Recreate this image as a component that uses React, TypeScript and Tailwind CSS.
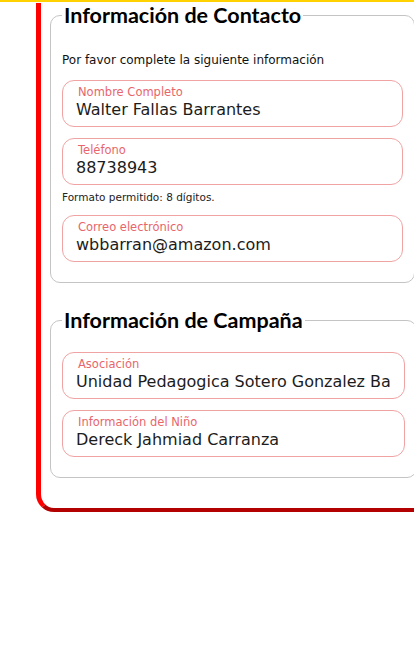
import React from 'react'

type Field = { label: string; value: string; hint?: string }

const contacto: Field[] = [
  { label: 'Nombre Completo', value: 'Walter Fallas Barrantes' },
  { label: 'Teléfono', value: '88738943', hint: 'Formato permitido: 8 dígitos.' },
  { label: 'Correo electrónico', value: 'wbbarran@amazon.com' },
]

const campana: Field[] = [
  { label: 'Asociación', value: 'Unidad Pedagogica Sotero Gonzalez Ba' },
  { label: 'Información del Niño', value: 'Dereck Jahmiad Carranza' },
]

function Input({ field }: { field: Field }) {
  return (
    <div>
      <div className="h-[47px] rounded-[12px] border border-[#f0a3a3] px-[13px] pt-[4px] overflow-hidden">
        <div className="text-[11.5px] leading-[14px] text-[#e8666b] pl-[2px]">{field.label}</div>
        <div className="text-[16px] leading-[22px] text-[#1c1c1c] whitespace-nowrap overflow-hidden">{field.value}</div>
      </div>
      {field.hint && <p className="mt-[5px] text-[10.5px] leading-[14px] text-[#222]">{field.hint}</p>}
    </div>
  )
}

function Section({ title, intro, fields }: { title: string; intro?: string; fields: Field[] }) {
  return (
    <fieldset className="rounded-[10px] border border-[#c4c4c4] px-[11px] pb-[20px]">
      <legend className="px-[2px] text-[21.5px] font-bold leading-[24px] text-black" style={{ fontFamily: 'Lato, sans-serif' }}>
        {title}
      </legend>
      {intro && <p className="mt-[24px] text-[12px] leading-[18px] text-[#111]">{intro}</p>}
      <div className={`flex flex-col gap-[11px] ${intro ? 'mt-[11px]' : 'mt-[20px]'}`}>
        {fields.map((f) => (
          <Input key={f.label} field={f} />
        ))}
      </div>
    </fieldset>
  )
}

export default function App() {
  return (
    <div className="w-[414px] h-[658px] overflow-hidden bg-white" style={{ fontFamily: '"DejaVu Sans", sans-serif' }}>
      <div className="h-[2px] bg-[#ffd200]" />
      <div className="ml-[36px] mt-[1px] w-[391px] rounded-bl-[18px] border-l-[5px] border-b-[4px] border-l-[#ff0000] border-b-[#b30000] pl-[9px] pr-[12px] pb-[30px] flex flex-col gap-[25px]">
        <Section
          title="Información de Contacto"
          intro="Por favor complete la siguiente información"
          fields={contacto}
        />
        <Section title="Información de Campaña" fields={campana} />
      </div>
    </div>
  )
}
